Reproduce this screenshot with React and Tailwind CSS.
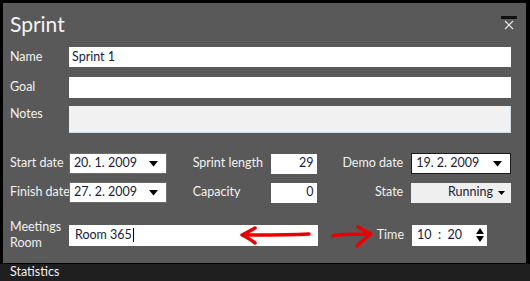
const Caret = ({ className = '' }) => (
  <svg className={className} width="9" height="6" viewBox="0 0 9 6">
    <path d="M0 0h9L4.5 5.5z" fill="#000" />
  </svg>
);

const DateBox = ({ value, border = 'border-[#6b6b6b]' }) => (
  <div className={`flex h-full items-center justify-between bg-white border ${border} pl-[4px] pr-[8px] text-[#1b1b3a]`}>
    <span>{value}</span>
    <Caret />
  </div>
);

const NumBox = ({ value }) => (
  <div className="flex h-[20px] items-center justify-end bg-white pr-[4px] text-[#1b1b3a]">{value}</div>
);

const Label = ({ children, className = '' }) => (
  <div className={`text-[#f2f2f2] ${className}`}>{children}</div>
);

export default function App() {
  return (
    <div
      className="flex h-[281px] w-[530px] flex-col overflow-hidden bg-black text-[12.5px]"
      style={{ fontFamily: 'Lato, "Noto Sans", sans-serif' }}
    >
      <div className="relative ml-[3px] mr-[4px] mt-[3px] flex-1 bg-[#595959] pl-[7px] pr-[15px]">
        <div className="absolute right-[9px] top-[13px] flex flex-col items-center">
          <div className="h-[3px] w-[16px] bg-[#111]" />
          <svg width="10" height="10" viewBox="0 0 10 10" className="mt-[1px]">
            <path d="M1 1l8 8M9 1l-8 8" stroke="#e8e8e8" strokeWidth="1.2" />
          </svg>
        </div>

        <div className="pt-[7px] text-[21px] leading-[28px] text-[#f4f4f4]">Sprint</div>

        <div className="mt-[9px] flex h-[20px] items-center">
          <Label className="w-[59px]">Name</Label>
          <div className="flex h-full flex-1 items-center bg-white pl-[3px] text-[#1b1b3a]">Sprint 1</div>
        </div>
        <div className="mt-[10px] flex h-[21px] items-center">
          <Label className="w-[59px]">Goal</Label>
          <div className="h-full flex-1 bg-white" />
        </div>
        <div className="mt-[8px] flex h-[27px] items-start">
          <Label className="w-[59px] -mt-[1px]">Notes</Label>
          <div className="h-full flex-1 border-b border-r border-[#cfdbe4] bg-[#f1f1f1]" />
        </div>

        <div className="mt-[20px] flex h-[21px] items-center">
          <Label className="w-[59px]">Start date</Label>
          <div className="h-full w-[98px]"><DateBox value="20. 1. 2009" /></div>
          <Label className="ml-[26px] w-[78px]">Sprint length</Label>
          <div className="w-[47px]"><NumBox value="29" /></div>
          <Label className="w-[94px] pr-[8px] text-right">Demo date</Label>
          <div className="h-full w-[100px]"><DateBox value="19. 2. 2009" border="border-[#1a1a1a]" /></div>
        </div>
        <div className="mt-[8px] flex h-[21px] items-center">
          <Label className="w-[59px] whitespace-nowrap">Finish date</Label>
          <div className="h-full w-[98px]"><DateBox value="27. 2. 2009" /></div>
          <Label className="ml-[26px] w-[78px]">Capacity</Label>
          <div className="w-[47px]"><NumBox value="0" /></div>
          <Label className="w-[94px] pr-[8px] text-right">State</Label>
          <div className="flex h-[20px] w-[100px] items-center justify-end gap-[5px] bg-[#efefef] pr-[6px] text-[#1b1b3a]">
            <span>Running</span>
            <svg width="7" height="4" viewBox="0 0 7 4"><path d="M0 0h7L3.5 4z" fill="#000" /></svg>
          </div>
        </div>

        <div className="relative mt-[20px] flex h-[24px] items-center">
          <Label className="w-[59px] leading-[16px]">Meetings<br />Room</Label>
          <div className="flex h-[21px] w-[249px] items-center bg-white pl-[6px] text-[#1b1b3a]">
            Room 365<span className="ml-[1px] h-[14px] w-[1px] bg-black" />
          </div>
          <div className="w-[94px] pr-[8px] text-right text-[#f2f2f2]">Time</div>
          <div className="flex h-[21px] w-[75px] items-center justify-between bg-white pl-[5px] pr-[3px] text-[#1b1b3a]">
            <span>10&nbsp;&nbsp;:&nbsp;&nbsp;20</span>
            <svg width="8" height="16" viewBox="0 0 8 16">
              <path d="M4 1L8 7H0z M0 9h8L4 15z" fill="#000" />
            </svg>
          </div>
          <svg className="absolute left-[226px] top-[0px]" width="140" height="26" viewBox="0 0 140 26">
            <path d="M73 11 C 50 12, 30 12, 8 12 M19 5 C 14 8, 10 10, 6 12 C 11 14, 15 17, 19 20" stroke="#ee0000" strokeWidth="3.5" fill="none" strokeLinecap="round" strokeLinejoin="round" />
            <path d="M97 13 C 105 10, 118 12, 133 11 M122 4 C 127 7, 130 9, 135 11 C 130 14, 125 19, 121 23" stroke="#ee0000" strokeWidth="3.5" fill="none" strokeLinecap="round" strokeLinejoin="round" />
          </svg>
        </div>
      </div>
      <div className="mt-[1px] flex h-[17px] items-center bg-[#1f1f1f] pl-[10px] text-[#f2f2f2]">Statistics</div>
    </div>
  );
}
